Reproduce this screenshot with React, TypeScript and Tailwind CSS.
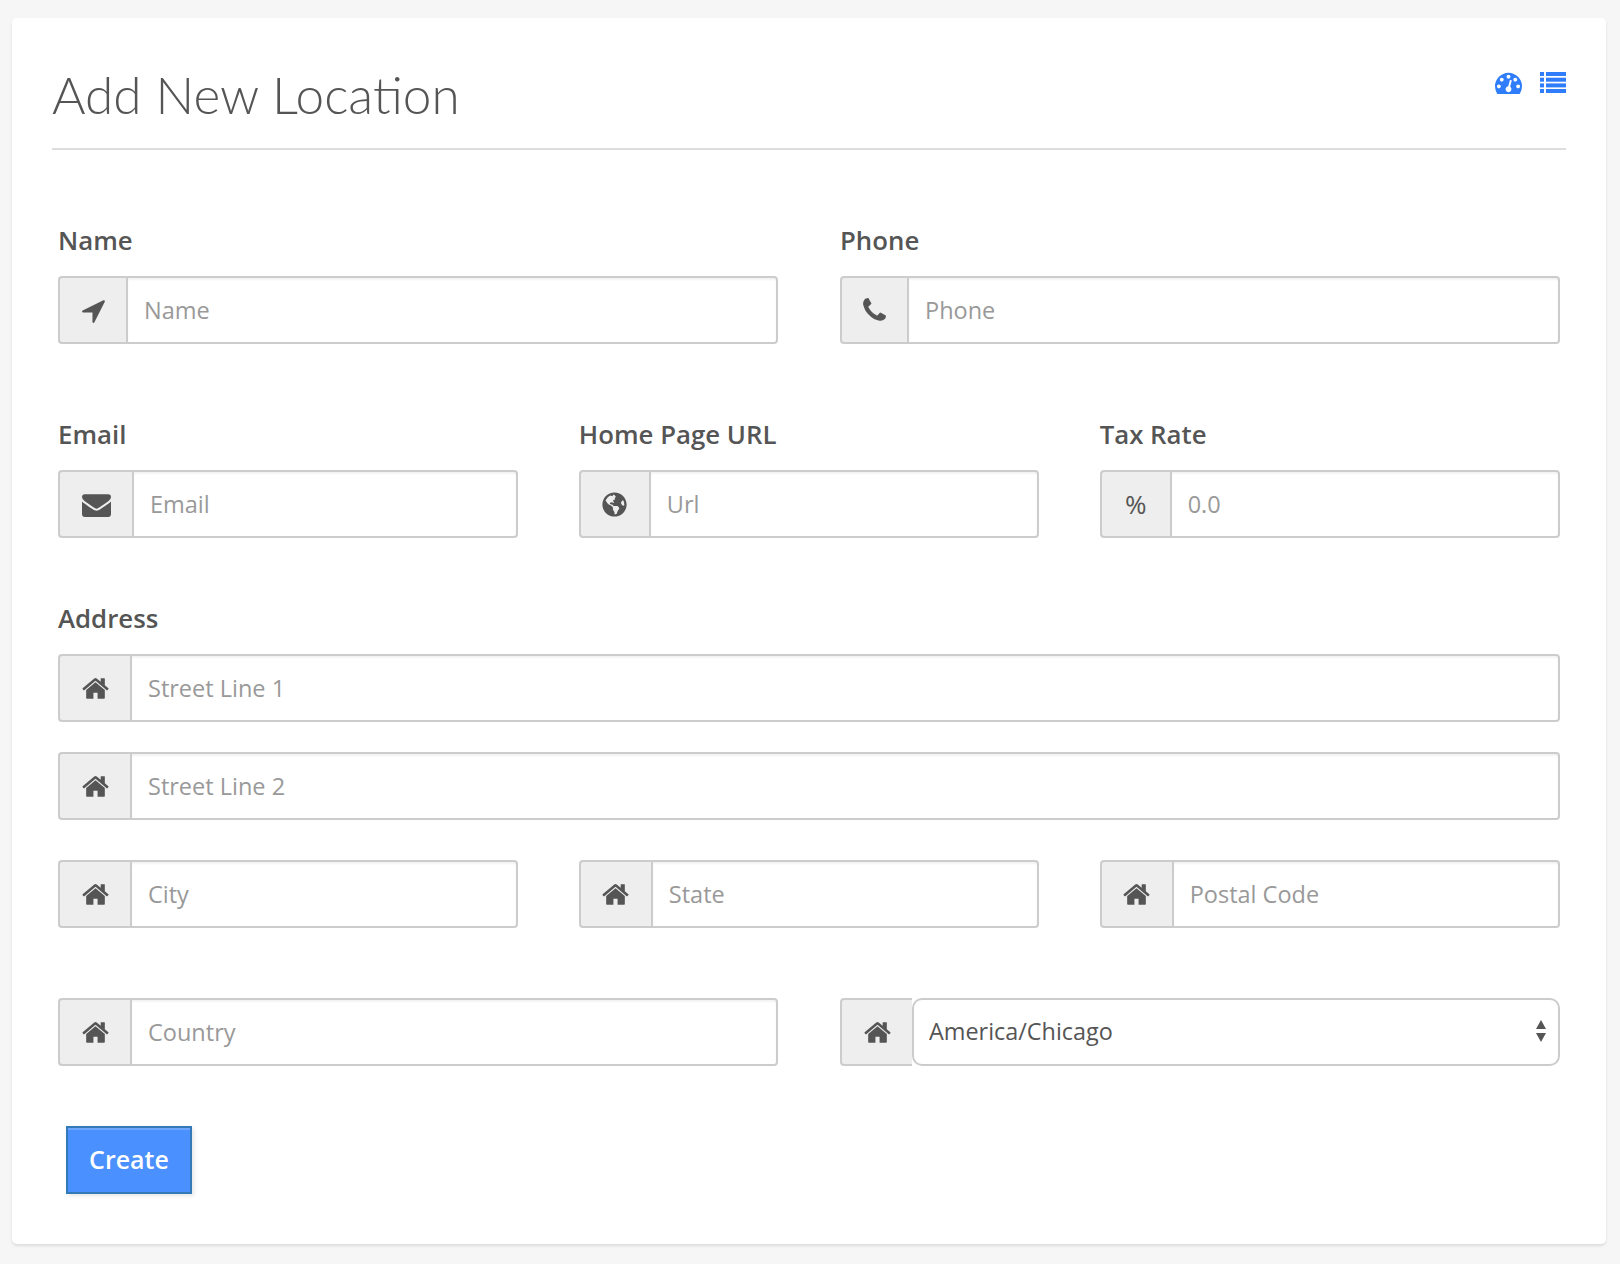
import type { ReactNode } from "react";
import { FaGlobeAmericas } from "react-icons/fa";

const HOME =
  "M1472 992v480q0 26-19 45t-45 19h-384v-384h-256v384h-384q-26 0-45-19t-19-45v-480q0-1 .5-3t.5-3l575-474 575 474q1 2 1 6zm223-69l-62 74q-8 9-21 11h-3q-13 0-21-7l-692-577-692 577q-12 8-24 7-13-2-21-11l-62-74q-8-10-7-23.500t11-21.500l719-599q32-26 76-26t76 26l244 204v-195q0-14 9-23t23-9h192q14 0 23 9t9 23v408l219 182q10 8 11 21.500t-7 23.500z";
const ARROW =
  "M1593 349l-640 1280q-17 35-57 35-5 0-15-2-22-5-35.500-22.500t-13.500-39.500v-576h-576q-22 0-39.500-13.500t-22.500-35.500 4-42 29-30l1280-640q13-7 29-7 27 0 45 19 15 14 18.500 34.500t-6.500 39.500z";
const PHONE =
  "M1600 1240q0 27-10 70.500t-21 68.500q-21 50-122 106-94 51-186 51-27 0-53-3.500t-57.500-12.500-47-14.500-55.500-20.500-49-18q-98-35-175-83-127-79-264-216t-216-264q-48-77-83-175-3-9-18-49t-20.500-55.500-14.500-47-12.500-57.500-3.500-53q0-92 51-186 56-101 106-122 25-11 68.500-21t70.500-10q14 0 21 3 18 6 53 76 11 19 30 54t35 63.500 31 53.500q3 4 17.500 25t21.500 35.500 7 28.500q0 20-28.500 50t-62 55-62 53-28.500 46q0 9 5 22.500t8.500 20.500 14 24 11.500 19q76 137 174 235t235 174q2 1 19 11.500t24 14 20.500 8.500 22.500 5q18 0 46-28.500t53-62 55-62 50-28.500q14 0 28.500 7t35.500 21.500 25 17.500q25 15 53.500 31t63.500 35 54 30q70 35 76 53 3 7 3 21z";
const ENVELOPE =
  "M1792 710v794q0 66-47 113t-113 47h-1472q-66 0-113-47t-47-113v-794q44 49 101 87 362 246 497 345 57 42 92.500 65.500t94.500 48 110 24.500h2q51 0 110-24.500t94.500-48 92.500-65.500q170-123 498-345 57-39 100-87zm0-294q0 79-49 151t-122 123q-376 261-468 325-10 7-42.500 30.500t-54 38-52 32.500-57.500 27-50 9h-2q-23 0-50-9t-57.500-27-52-32.500-54-38-42.500-30.500q-91-64-262-182.500t-205-142.500q-62-42-117-115.500t-55-136.500q0-78 41.500-130t118.500-52h1472q65 0 112.500 47t47.500 113z";
const DASHBOARD =
  "M384 1152q0-53-37.500-90.500t-90.500-37.500-90.500 37.500-37.500 90.500 37.500 90.500 90.500 37.500 90.500-37.500 37.500-90.500zm192-448q0-53-37.500-90.500t-90.500-37.500-90.500 37.500-37.500 90.500 37.500 90.500 90.500 37.500 90.500-37.500 37.500-90.500zm428 481l101-382q6-26-7.500-48.500t-38.500-29.500-48 6.500-30 39.500l-101 382q-60 5-107 43.500t-63 98.500q-20 77 20 146t117 89 146-20 89-117q16-60-6-117t-72-91zm660-33q0-53-37.500-90.500t-90.500-37.500-90.500 37.500-37.500 90.500 37.500 90.500 90.500 37.500 90.500-37.500 37.500-90.500zm-640-640q0-53-37.500-90.500t-90.500-37.500-90.500 37.500-37.500 90.500 37.500 90.500 90.500 37.500 90.500-37.500 37.500-90.500zm448 192q0-53-37.500-90.500t-90.500-37.500-90.500 37.500-37.500 90.500 37.500 90.500 90.500 37.500 90.500-37.500 37.500-90.500zm320 448q0 261-141 483-19 29-54 29h-1402q-35 0-54-29-141-221-141-483 0-182 71-348t191-286 286-191 348-71 348 71 286 191 191 286 71 348z";

const Fa = ({ d, className }: { d: string; className: string }) => (
  <svg viewBox="0 0 1792 1792" fill="currentColor" className={className}>
    <path d={d} />
  </svg>
);

const Home = () => <Fa d={HOME} className="size-[29px]" />;

const ListIcon = () => (
  <svg viewBox="0 0 26 21" fill="#2f7dfb" className="h-[21px] w-[26px]">
    <rect x="0" y="0" width="4" height="4" />
    <rect x="6" y="0" width="20" height="4" />
    <rect x="0" y="5.700" width="4" height="4" />
    <rect x="6" y="5.700" width="20" height="4" />
    <rect x="0" y="11.400" width="4" height="4" />
    <rect x="6" y="11.400" width="20" height="4" />
    <rect x="0" y="17" width="4" height="4" />
    <rect x="6" y="17" width="20" height="4" />
  </svg>
);

const Label = ({ children }: { children: ReactNode }) => (
  <label className="mb-[18px] block text-[25.8px] leading-9 font-semibold text-[#555]">
    {children}
  </label>
);

const Field = ({
  icon,
  addon,
  placeholder,
}: {
  icon: ReactNode;
  addon: string;
  placeholder: string;
}) => (
  <div className="flex h-[68px] min-w-0">
    <span
      className={`flex shrink-0 items-center justify-center rounded-l-[4px] border-2 border-r-0 border-[#ccc] bg-[#eee] text-[#555] ${addon}`}
    >
      {icon}
    </span>
    <input
      placeholder={placeholder}
      className="w-full min-w-0 rounded-r-[4px] border-2 border-[#ccc] bg-white pt-[2px] pr-4 pl-4 text-[23.500px] text-[#555] shadow-[inset_0_2px_2px_rgba(0,0,0,0.05)] outline-none placeholder:text-[#999]"
    />
  </div>
);

export default function App() {
  return (
    <div className="min-h-[1264px] bg-[#f6f6f6] pt-[18px] pr-[14px] pb-5 pl-3 font-['Open_Sans',sans-serif]">
      <div className="h-[1226px] rounded-[5px] bg-white px-10 pt-[46px] shadow-[0_2px_3px_rgba(0,0,0,0.1)]">
        <div className="flex items-start justify-between border-b-2 border-[#ddd] pb-6">
          <h1 className="font-['Lato',sans-serif] text-[51.300px] leading-[60px] font-light text-[#555]">
            Add New Location
          </h1>
          <div className="mt-[5px] flex items-center gap-[18px] text-[#2f7dfb]">
            <Fa d={DASHBOARD} className="size-[27px]" />
            <ListIcon />
          </div>
        </div>

        <form className="px-1.5 pt-[72px]">
          <div className="grid grid-cols-2 gap-x-[62px]">
            <div>
              <Label>Name</Label>
              <Field
                icon={<Fa d={ARROW} className="size-[29px]" />}
                addon="w-[68px]"
                placeholder="Name"
              />
            </div>
            <div>
              <Label>Phone</Label>
              <Field
                icon={<Fa d={PHONE} className="size-[29px]" />}
                addon="w-[67px]"
                placeholder="Phone"
              />
            </div>
          </div>

          <div className="mt-[72px] grid grid-cols-3 gap-x-[60.500px]">
            <div>
              <Label>Email</Label>
              <Field
                icon={<Fa d={ENVELOPE} className="size-[29px]" />}
                addon="w-[74px]"
                placeholder="Email"
              />
            </div>
            <div>
              <Label>Home Page URL</Label>
              <Field
                icon={<FaGlobeAmericas className="size-[25px]" />}
                addon="w-[70px]"
                placeholder="Url"
              />
            </div>
            <div>
              <Label>Tax Rate</Label>
              <Field
                icon={<span className="text-[26px] font-medium">%</span>}
                addon="w-[70px]"
                placeholder="0.0"
              />
            </div>
          </div>

          <div className="mt-[62px]">
            <Label>Address</Label>
            <Field icon={<Home />} addon="w-[72px]" placeholder="Street Line 1" />
            <div className="mt-[30px]">
              <Field icon={<Home />} addon="w-[72px]" placeholder="Street Line 2" />
            </div>
          </div>

          <div className="mt-10 grid grid-cols-3 gap-x-[60.500px]">
            <Field icon={<Home />} addon="w-[72px]" placeholder="City" />
            <Field icon={<Home />} addon="w-[72px]" placeholder="State" />
            <Field icon={<Home />} addon="w-[72px]" placeholder="Postal Code" />
          </div>

          <div className="mt-[70px] grid grid-cols-2 gap-x-[62px]">
            <Field icon={<Home />} addon="w-[72px]" placeholder="Country" />
            <div className="flex h-[68px]">
              <span className="flex w-[72px] shrink-0 items-center justify-center rounded-l-[4px] border-2 border-r-0 border-[#ccc] bg-[#eee] text-[#555]">
                <Home />
              </span>
              <div className="relative min-w-0 flex-1">
                <select
                  defaultValue="America/Chicago"
                  className="h-full w-full appearance-none rounded-[10px] border-2 border-[#ccc] bg-white px-[15px] text-[23.400px] text-[#555] outline-none"
                >
                  <option>America/Chicago</option>
                  <option>America/New_York</option>
                </select>
                <svg
                  viewBox="0 0 12 22"
                  fill="#555"
                  className="pointer-events-none absolute top-[22px] right-[13px] h-[22px] w-3"
                >
                  <path d="M6 0l5 9H1zM6 22L1 13h10z" />
                </svg>
              </div>
            </div>
          </div>

          <button
            type="button"
            className="mt-[60px] ml-2 h-[68px] w-[126px] border-2 border-[#337ab7] bg-[#4a90ff] text-[25px] font-semibold text-white shadow-[inset_0_2px_0_rgba(255,255,255,0.2),2px_2px_4px_rgba(0,0,0,0.1)]"
          >
            Create
          </button>
        </form>
      </div>
    </div>
  );
}
